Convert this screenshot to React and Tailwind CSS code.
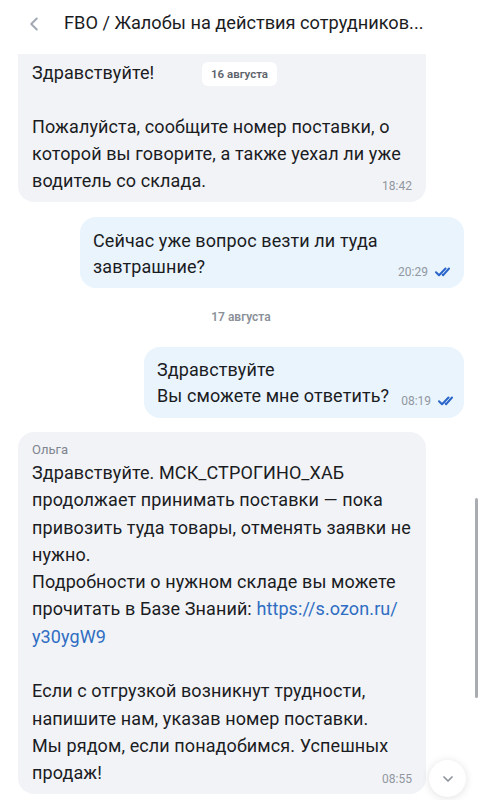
import { ChevronLeft, ChevronDown } from 'lucide-react';

const font = { fontFamily: 'Roboto, "Noto Sans", sans-serif' };

function Ticks() {
  return (
    <svg width="15" height="10" viewBox="0 0 15 10" fill="none" className="text-[#2a66c9]">
      <path d="M1 5.2l3 3L10.5 1.5" stroke="currentColor" strokeWidth="2" strokeLinecap="round" strokeLinejoin="round" />
      <path d="M7.6 7.6l.6.6L14 1.5" stroke="currentColor" strokeWidth="2" strokeLinecap="round" strokeLinejoin="round" />
    </svg>
  );
}

function Time({ value, read }) {
  return (
    <span className="ml-3 inline-flex shrink-0 items-center gap-[7px] self-end pb-[2px] text-[12px] leading-none tracking-normal text-[#9197a0]">
      {value}
      {read && <Ticks />}
    </span>
  );
}

export default function App() {
  return (
    <div className="relative h-[800px] w-[482px] overflow-hidden bg-white text-[#1b1c1f]" style={font}>
      <header className="flex h-[47px] items-center pl-[23px]">
        <ChevronLeft className="h-[22px] w-[22px] text-[#a3a9b2]" strokeWidth={2.2} />
        <h1 className="ml-[19px] whitespace-nowrap text-[18.2px] leading-none text-[#1b1c1f]">
          FBO / Жалобы на действия сотрудников...
        </h1>
      </header>

      <div className="flex flex-col whitespace-nowrap px-[18px] pt-[7px] text-[18px] tracking-[0.1px]">
        {/* incoming */}
        <div className="relative w-[408px] rounded-b-[16px] bg-[#f1f3f7] px-[14px] pb-[8px] pt-[5px] leading-[27px]">
          <span className="absolute left-[184px] top-[8px] rounded-[6px] bg-white px-[9px] py-[5px] text-[11.5px] font-semibold leading-[14px] tracking-normal text-[#5d636b]">
            16 августа
          </span>
          <p>Здравствуйте!</p>
          <p>&nbsp;</p>
          <p>Пожалуйста, сообщите номер поставки, о</p>
          <p>которой вы говорите, а также уехал ли уже</p>
          <div className="flex justify-between">
            <span>водитель со склада.</span>
            <Time value="18:42" />
          </div>
        </div>

        {/* outgoing */}
        <div className="ml-auto mt-[15px] w-[384px] rounded-[16px] bg-[#e9f4fd] px-[13px] pb-[8px] pt-[11px] leading-[26px]">
          <p>Сейчас уже вопрос везти ли туда</p>
          <div className="flex justify-between pr-[1px]">
            <span>завтрашние?</span>
            <Time value="20:29" read />
          </div>
        </div>

        <div className="py-[22px] text-center text-[12px] font-semibold leading-[15px] tracking-normal text-[#8a9099]">17 августа</div>

        <div className="ml-auto w-[320px] rounded-[16px] bg-[#e9f4fd] px-[13px] pb-[9px] pt-[10px] leading-[26px]">
          <p>Здравствуйте</p>
          <div className="flex justify-between pr-[1px]">
            <span>Вы сможете мне ответить?</span>
            <Time value="08:19" read />
          </div>
        </div>

        {/* incoming */}
        <div className="mt-[14px] w-[408px] rounded-[16px] bg-[#f1f3f7] px-[14px] pb-[7px] pt-[9px] leading-[27.3px]">
          <p className="text-[13px] leading-[18px] tracking-normal text-[#7f858e]">Ольга</p>
          <p>Здравствуйте. МСК_СТРОГИНО_ХАБ</p>
          <p>продолжает принимать поставки — пока</p>
          <p>привозить туда товары, отменять заявки не</p>
          <p>нужно.</p>
          <p>Подробности о нужном складе вы можете</p>
          <p>
            прочитать в Базе Знаний: <span className="text-[#2f6dc2]">https://s.ozon.ru/</span>
          </p>
          <p className="text-[#2f6dc2]">y30ygW9</p>
          <p>&nbsp;</p>
          <p>Если с отгрузкой возникнут трудности,</p>
          <p>напишите нам, указав номер поставки.</p>
          <p>Мы рядом, если понадобимся. Успешных</p>
          <div className="flex justify-between">
            <span>продаж!</span>
            <Time value="08:55" />
          </div>
        </div>
      </div>

      <div className="absolute left-[475px] top-[498px] h-[200px] w-[3px] rounded-full bg-[#a9acb1]" />

      <button className="absolute left-[429px] top-[760px] flex h-[37px] w-[37px] items-center justify-center rounded-full bg-white shadow-[0_1px_8px_rgba(0,0,0,0.12)]">
        <ChevronDown className="h-[16px] w-[16px] text-[#8e949c]" strokeWidth={2.6} />
      </button>
    </div>
  );
}
